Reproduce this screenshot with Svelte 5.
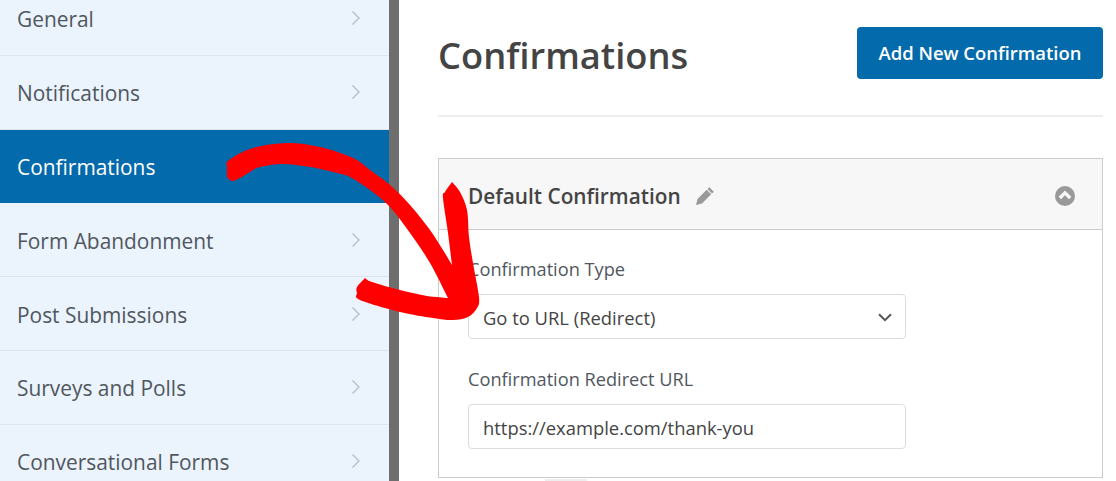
<script>
  const items = ['General', 'Notifications', 'Confirmations', 'Form Abandonment', 'Post Submissions', 'Surveys and Polls', 'Conversational Forms'];

  // Hand-traced outline of the hand-drawn arrow; each run is smoothed, corners stay sharp.
  const outline = [
    [[227,177],[227,168],[229,160],[253,148],[287,143],[320,147],[353,158],[370,170],[390,185],[410,205],[430,230],[443,250],[452,265]],
    [[452,265],[448,233],[443,198],[445,192],[452,182]],
    [[452,182],[460,192],[467,210],[469,237],[473,263],[479,297],[477,308],[468,317],[453,320],[433,318],[400,312],[360,300],[357,293],[357,287],[365,278]],
    [[365,278],[372,282],[400,290],[427,296],[448,298]],
    [[448,298],[430,263],[410,233],[390,207],[370,190],[350,177],[337,173],[310,167],[283,164],[260,167],[250,172],[240,178],[232,181],[227,177]]
  ];

  function smooth(runs) {
    let d = `M${runs[0][0][0]} ${runs[0][0][1]}`;
    for (const p of runs) {
      for (let i = 0; i < p.length - 1; i++) {
        const a = p[Math.max(i - 1, 0)], b = p[i], c = p[i + 1], e = p[Math.min(i + 2, p.length - 1)];
        const c1 = [b[0] + (c[0] - a[0]) / 6, b[1] + (c[1] - a[1]) / 6];
        const c2 = [c[0] - (e[0] - b[0]) / 6, c[1] - (e[1] - b[1]) / 6];
        d += `C${c1[0].toFixed(1)} ${c1[1].toFixed(1)} ${c2[0].toFixed(1)} ${c2[1].toFixed(1)} ${c[0]} ${c[1]}`;
      }
    }
    return d + 'Z';
  }
  const arrowPath = smooth(outline);
</script>

<div class="page">
  <nav class="side">
    {#each items as item}
      <div class="row" class:active={item === 'Confirmations'}>
        <span>{item}</span>
        <svg class="chev" width="10" height="16" viewBox="0 0 10 16"><path d="M1.5 1.500 8 8l-6.500 6.500" fill="none" stroke="currentColor" stroke-width="1.300"/></svg>
      </div>
    {/each}
  </nav>
  <div class="divider"></div>
  <main class="main">
    <header class="head">
      <h1>Confirmations</h1>
      <button class="add">Add New Confirmation</button>
    </header>
    <section class="panel">
      <div class="panel-head">
        <h2>Default Confirmation</h2>
        <svg class="pencil" width="20" height="20" viewBox="0 0 20 20"><path d="M14.300 1.200 18.800 5.700 17 7.500 12.500 3ZM11.700 3.800 16.200 8.300 7 17.500 1 19 2.500 13Z" fill="#999"/></svg>
        <svg class="toggle" width="20" height="20" viewBox="0 0 20 20"><circle cx="10" cy="10" r="10" fill="#999"/><path d="M4.800 12 10 6.900 15.200 12" fill="none" stroke="#f7f7f7" stroke-width="3.400"/></svg>
      </div>
      <div class="panel-body">
        <label class="lbl" for="ctype">Confirmation Type</label>
        <div class="field" id="ctype">
          <span>Go to URL (Redirect)</span>
          <svg width="14" height="9" viewBox="0 0 14 9"><path d="M1 1.200 7 7.200 13 1.200" fill="none" stroke="#555" stroke-width="2"/></svg>
        </div>
        <label class="lbl second" for="curl">Confirmation Redirect URL</label>
        <div class="field" id="curl"><span>https://example.com/thank-you</span></div>
      </div>
    </section>
    <div class="tab"></div>
  </main>
  <svg class="arrow" width="1116" height="481" viewBox="0 0 1116 481">
    <path fill="#f00" d={arrowPath}/>
  </svg>
</div>

<style>
  :global(body) {
    margin: 0;
    background: #fff;
  }
  .page {
    position: relative;
    display: flex;
    width: 1116px;
    height: 481px;
    overflow: hidden;
    font-family: "Open Sans", sans-serif;
    color: #444;
  }
  .side {
    flex: 0 0 389px;
    margin-top: -18px;
    background: #ebf3fc;
  }
  .row {
    display: flex;
    justify-content: space-between;
    align-items: center;
    box-sizing: border-box;
    height: 73.8px;
    padding: 0 28px 0 17px;
    border-bottom: 1px solid #dfe5ee;
    font-size: 20.9px;
    color: #50575e;
  }
  .row span {
    position: relative;
    top: 1px;
  }
  .chev {
    color: #b5bcc4;
    margin-top: 0;
  }
  .row.active {
    background: #036aab;
    color: #fff;
    border-bottom-color: #036aab;
  }
  .row.active .chev {
    color: #fff;
  }
  .divider {
    flex: 0 0 10px;
    background: #6e6e6e;
  }
  .main {
    flex: 0 0 665px;
    margin-left: 39px;
  }
  .head {
    display: flex;
    justify-content: space-between;
    align-items: flex-start;
    box-sizing: border-box;
    height: 117px;
    padding-top: 27px;
    border-bottom: 2px solid #eee;
  }
  h1 {
    margin: 4px 0 0;
    font-size: 36.3px;
    line-height: 49px;
    font-weight: 600;
    color: #444;
  }
  .add {
    width: 246px;
    height: 52px;
    padding: 0 0 2px;
    border: 0;
    border-radius: 4px;
    background: #036aab;
    color: #fff;
    font: 600 18.45px "Open Sans", sans-serif;
  }
  .panel {
    box-sizing: border-box;
    height: 320px;
    margin-top: 41px;
    border: 1px solid #ccc;
  }
  .panel-head {
    display: flex;
    align-items: center;
    box-sizing: border-box;
    height: 71px;
    padding: 3px 27px 0 29px;
    background: #f7f7f7;
    border-bottom: 1px solid #ccc;
  }
  h2 {
    margin: 0;
    font-size: 20.8px;
    font-weight: 600;
    color: #444;
  }
  .pencil {
    margin-left: 14px;
  }
  .toggle {
    margin-left: auto;
  }
  .panel-body {
    padding: 27px 0 0 29px;
  }
  .lbl {
    display: block;
    height: 24px;
    font-size: 18.2px;
    line-height: 24px;
    color: #50575e;
  }
  .second {
    margin-top: 28px;
  }
  .field {
    display: flex;
    justify-content: space-between;
    align-items: center;
    box-sizing: border-box;
    width: 438px;
    height: 45px;
    margin-top: 13px;
    padding: 1px 13px 0 14px;
    border: 1px solid #dcdcdc;
    border-radius: 4px;
    background: #fff;
    font-size: 18.4px;
    color: #444;
  }
  .tab {
    width: 42px;
    height: 4px;
    margin: 1px 0 0 107px;
    background: #eee;
  }
  .arrow {
    position: absolute;
    left: 0;
    top: 0;
    pointer-events: none;
  }
</style>
